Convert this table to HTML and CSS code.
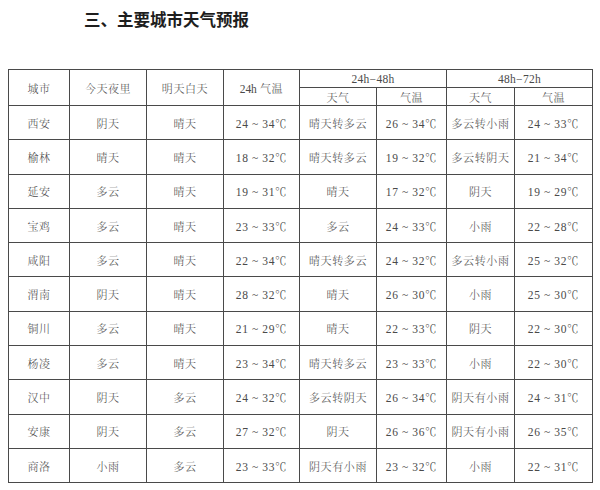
FILE: index.html
```html
<!DOCTYPE html>
<html lang="zh">
<head>
<meta charset="utf-8">
<link rel="stylesheet" href="styles.css">
</head>
<body>
<div class="title">三、主要城市天气预报</div>
<table class="wx">
<colgroup>
<col class="c1"><col class="c2"><col class="c3"><col class="c4"><col class="c5"><col class="c6"><col class="c7"><col class="c8">
</colgroup>
<thead>
<tr class="h1">
<th rowspan="2">城市</th><th rowspan="2">今天夜里</th><th rowspan="2">明天白天</th><th rowspan="2"><span class="num">24h</span> 气温</th>
<th colspan="2" class="num">24h−48h</th><th colspan="2" class="num">48h−72h</th>
</tr>
<tr class="h2"><th>天气</th><th>气温</th><th>天气</th><th>气温</th></tr>
</thead>
<tbody>
<tr><td>西安</td><td>阴天</td><td>晴天</td><td class="num">24 ~ 34℃</td><td>晴天转多云</td><td class="num">26 ~ 34℃</td><td>多云转小雨</td><td class="num">24 ~ 33℃</td></tr>
<tr><td>榆林</td><td>晴天</td><td>晴天</td><td class="num">18 ~ 32℃</td><td>晴天转多云</td><td class="num">19 ~ 32℃</td><td>多云转阴天</td><td class="num">21 ~ 34℃</td></tr>
<tr><td>延安</td><td>多云</td><td>晴天</td><td class="num">19 ~ 31℃</td><td>晴天</td><td class="num">17 ~ 32℃</td><td>阴天</td><td class="num">19 ~ 29℃</td></tr>
<tr><td>宝鸡</td><td>多云</td><td>晴天</td><td class="num">23 ~ 33℃</td><td>多云</td><td class="num">24 ~ 33℃</td><td>小雨</td><td class="num">22 ~ 28℃</td></tr>
<tr><td>咸阳</td><td>多云</td><td>晴天</td><td class="num">22 ~ 34℃</td><td>晴天转多云</td><td class="num">24 ~ 32℃</td><td>多云转小雨</td><td class="num">25 ~ 32℃</td></tr>
<tr><td>渭南</td><td>阴天</td><td>晴天</td><td class="num">28 ~ 32℃</td><td>晴天</td><td class="num">26 ~ 30℃</td><td>小雨</td><td class="num">25 ~ 30℃</td></tr>
<tr><td>铜川</td><td>多云</td><td>晴天</td><td class="num">21 ~ 29℃</td><td>晴天</td><td class="num">22 ~ 33℃</td><td>阴天</td><td class="num">22 ~ 30℃</td></tr>
<tr><td>杨凌</td><td>多云</td><td>晴天</td><td class="num">23 ~ 34℃</td><td>晴天转多云</td><td class="num">23 ~ 33℃</td><td>小雨</td><td class="num">22 ~ 30℃</td></tr>
<tr><td>汉中</td><td>阴天</td><td>多云</td><td class="num">24 ~ 32℃</td><td>多云转阴天</td><td class="num">26 ~ 34℃</td><td>阴天有小雨</td><td class="num">24 ~ 31℃</td></tr>
<tr><td>安康</td><td>阴天</td><td>多云</td><td class="num">27 ~ 32℃</td><td>阴天</td><td class="num">26 ~ 36℃</td><td>阴天有小雨</td><td class="num">26 ~ 35℃</td></tr>
<tr><td>商洛</td><td>小雨</td><td>多云</td><td class="num">23 ~ 33℃</td><td>阴天有小雨</td><td class="num">23 ~ 32℃</td><td>小雨</td><td class="num">22 ~ 31℃</td></tr>
</tbody>
</table>
</body>
</html>
```
FILE: styles.css
```css
html, body {
  margin: 0;
  background: #ffffff;
}
body {
  padding: 8px;
}
.title {
  box-sizing: border-box;
  margin-top: -8px;
  height: 69px;
  padding: 9px 0 0 76px;
  font-family: "Noto Sans CJK SC", sans-serif;
  font-weight: 700;
  font-size: 16.5px;
  line-height: 20px;
  color: #1e1e1e;
}
.wx {
  border-collapse: collapse;
  table-layout: fixed;
  width: 584px;
  font-family: "Noto Serif CJK SC", "Noto Sans CJK SC", serif;
  font-weight: 300;
  font-size: 11px;
  color: #4a4a4a;
}
.c1 { width: 61px; }
.c2 { width: 77px; }
.c3 { width: 77px; }
.c4 { width: 76px; }
.c5 { width: 77px; }
.c6 { width: 70px; }
.c7 { width: 68px; }
.c8 { width: 78px; }
.wx th, .wx td {
  border: 1.6px solid #4a4a4a;
  padding: 0;
  text-align: center;
  vertical-align: middle;
  font-weight: 300;
  letter-spacing: 0.6px;
  white-space: nowrap;
}
.wx tr.h1 th { height: 17px; }
.wx tr.h2 th { height: 17px; }
.wx tbody td { height: 33.3px; }
.num {
  font-family: "Liberation Serif", "Noto Serif CJK SC", "Noto Sans CJK SC", serif;
  font-size: 11.5px;
  letter-spacing: -0.2px;
  font-weight: 400;
}
.wx th.num { letter-spacing: 0.3px; }
```
